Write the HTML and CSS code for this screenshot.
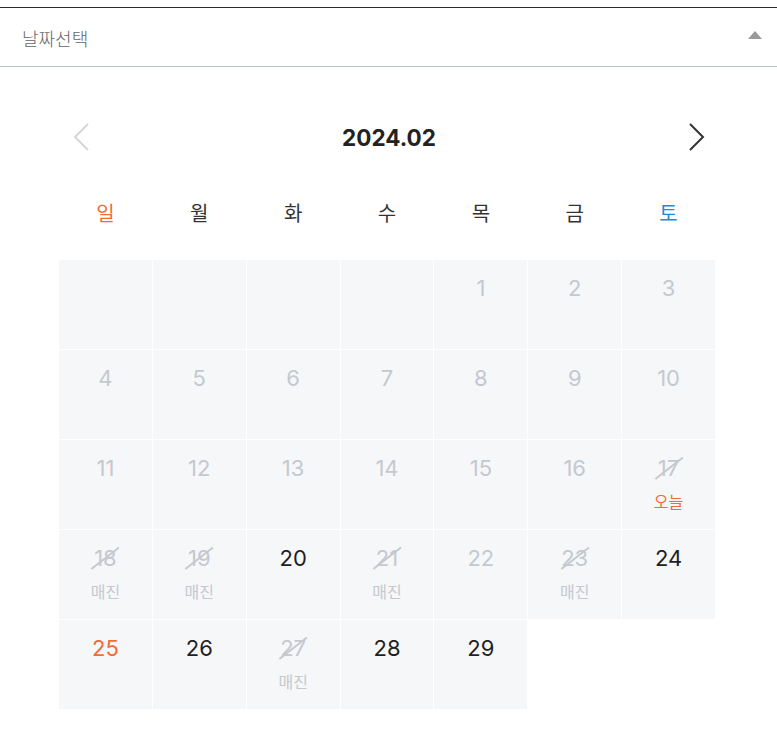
FILE: index.html
```html
<!DOCTYPE html>
<html lang="ko">
<head>
<meta charset="utf-8">
<link rel="stylesheet" href="styles.css">
</head>
<body>
<div class="picker">
  <div class="head">
    <span class="head-title">날짜선택</span>
    <span class="caret"></span>
  </div>
  <div class="cal">
    <div class="nav">
      <svg class="arrow prev" width="18" height="30" viewBox="0 0 18 30"><polyline points="16,2 3,15 16,28" fill="none" stroke-width="2"/></svg>
      <div class="month">2024.02</div>
      <svg class="arrow next" width="18" height="30" viewBox="0 0 18 30"><polyline points="2,2 15,15 2,28" fill="none" stroke-width="2"/></svg>
    </div>
    <div class="weekdays">
      <span class="sun">일</span><span>월</span><span>화</span><span>수</span><span>목</span><span>금</span><span class="sat">토</span>
    </div>
    <div class="grid">
      <div class="cell"></div>
      <div class="cell"></div>
      <div class="cell"></div>
      <div class="cell"></div>
      <div class="cell off"><span class="num">1</span></div>
      <div class="cell off"><span class="num">2</span></div>
      <div class="cell off"><span class="num">3</span></div>

      <div class="cell off"><span class="num">4</span></div>
      <div class="cell off"><span class="num">5</span></div>
      <div class="cell off"><span class="num">6</span></div>
      <div class="cell off"><span class="num">7</span></div>
      <div class="cell off"><span class="num">8</span></div>
      <div class="cell off"><span class="num">9</span></div>
      <div class="cell off"><span class="num">10</span></div>

      <div class="cell off"><span class="num">11</span></div>
      <div class="cell off"><span class="num">12</span></div>
      <div class="cell off"><span class="num">13</span></div>
      <div class="cell off"><span class="num">14</span></div>
      <div class="cell off"><span class="num">15</span></div>
      <div class="cell off"><span class="num">16</span></div>
      <div class="cell off"><span class="num strike">17</span><span class="label today">오늘</span></div>

      <div class="cell off"><span class="num strike">18</span><span class="label">매진</span></div>
      <div class="cell off"><span class="num strike">19</span><span class="label">매진</span></div>
      <div class="cell"><span class="num">20</span></div>
      <div class="cell off"><span class="num strike">21</span><span class="label">매진</span></div>
      <div class="cell off"><span class="num">22</span></div>
      <div class="cell off"><span class="num strike">23</span><span class="label">매진</span></div>
      <div class="cell"><span class="num">24</span></div>

      <div class="cell holiday"><span class="num">25</span></div>
      <div class="cell"><span class="num">26</span></div>
      <div class="cell off"><span class="num strike">27</span><span class="label">매진</span></div>
      <div class="cell"><span class="num">28</span></div>
      <div class="cell"><span class="num">29</span></div>
    </div>
  </div>
</div>
</body>
</html>
```

FILE: styles.css
```css
* { box-sizing: border-box; }
html, body { margin: 0; padding: 0; background: #fff; }
body {
  font-family: Inter, "Noto Sans CJK KR", "Noto Sans", sans-serif;
  color: #222;
}
.picker {
  margin-top: 7px;
  border-top: 1px solid #2b2b2b;
}
.head {
  height: 59px;
  display: flex;
  align-items: center;
  justify-content: space-between;
  padding: 0 15px 0 22px;
  border-bottom: 1px solid #bcc4cb;
}
.head-title {
  font-family: "Noto Sans CJK KR", sans-serif;
  font-size: 18px;
  font-weight: 300;
  color: #666;
  margin-top: 1px;
}
.caret {
  width: 0;
  height: 0;
  border-left: 7px solid transparent;
  border-right: 7px solid transparent;
  border-bottom: 8px solid #9a9a9a;
  margin-top: -4px;
}
.cal {
  padding: 0 62px 0 59px;
}
.nav {
  margin-top: 50px;
  height: 40px;
  display: flex;
  align-items: center;
  justify-content: space-between;
  padding: 0 9px 0 13px;
}
.arrow.prev { stroke: #d3d7dc; }
.arrow.next { stroke: #333; }
.month {
  font-size: 22.5px;
  font-weight: 700;
  color: #222;
}
.weekdays {
  margin-top: 40px;
  height: 30px;
  display: grid;
  grid-template-columns: repeat(7, 1fr);
  gap: 1px;
  align-items: center;
  text-align: center;
  font-family: "Noto Sans CJK KR", sans-serif;
  font-size: 20px;
  color: #333;
}
.weekdays .sun { color: #f2693b; }
.weekdays .sat { color: #1a8ddd; }
.grid {
  margin-top: 33px;
  display: grid;
  grid-template-columns: repeat(7, 1fr);
  grid-auto-rows: 89px;
  gap: 1px;
}
.cell {
  background: #f6f7f9;
  display: flex;
  flex-direction: column;
  align-items: center;
  padding-top: 15px;
}
.num {
  position: relative;
  font-size: 22px;
  line-height: 26px;
  color: #1f1f1f;
}
.off .num { color: #c4c9cf; }
.holiday .num { color: #f26a35; }
.strike::after {
  content: "";
  position: absolute;
  left: 50%;
  top: 50%;
  width: 35px;
  height: 1.5px;
  background: #c4c9cf;
  transform: translate(-50%, -50%) rotate(-38deg);
}
.label {
  margin-top: 10px;
  font-family: "Noto Sans CJK KR", sans-serif;
  font-size: 16px;
  line-height: 20px;
  color: #c4c9cf;
}
.label.today { color: #f2693b; }
```
